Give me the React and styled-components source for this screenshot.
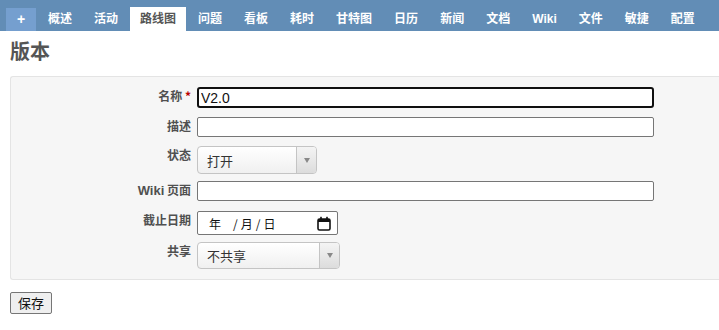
import React from "react";
import styled, { createGlobalStyle } from "styled-components";

const GlobalStyle = createGlobalStyle`
  html, body {
    margin: 0;
    padding: 0;
    background: #fff;
  }
  body {
    font-family: "Liberation Sans", "Noto Sans CJK SC", sans-serif;
    font-size: 12px;
    color: #333;
  }
`;

const TABS = ["概述", "活动", "路线图", "问题", "看板", "耗时", "甘特图", "日历", "新闻", "文档", "Wiki", "文件", "敏捷", "配置"];

function App() {
  return (
    <Page>
      <GlobalStyle />
      <MainMenu>
        <Tab $new>+</Tab>
        {TABS.map((t) => (
          <Tab key={t} $selected={t === "路线图"}>
            {t}
          </Tab>
        ))}
      </MainMenu>

      <Title>版本</Title>

      <Box>
        <Row $h={30}>
          <Label>
            名称 <Required>*</Required>
          </Label>
          <TextInput $focused defaultValue="V2.0" />
        </Row>
        <Row $h={29}>
          <Label>描述</Label>
          <TextInput />
        </Row>
        <Row $h={35}>
          <Label>状态</Label>
          <Select $w={120}>
            <span>打开</span>
            <Arrow />
          </Select>
        </Row>
        <Row $h={30}>
          <Label>
            <b>Wiki</b> 页面
          </Label>
          <TextInput />
        </Row>
        <Row $h={31}>
          <Label>截止日期</Label>
          <DateInput>
            <DateText>
              <span>年</span>
              <Slash>/</Slash>
              <span>月</span>
              <Slash $tight>/</Slash>
              <span>日</span>
            </DateText>
            <svg width="14" height="15" viewBox="0 0 14 15">
              <rect x="1" y="3" width="12" height="11" rx="1.5" fill="none" stroke="#111" strokeWidth="1.6" />
              <rect x="1" y="3" width="12" height="3" fill="#111" />
              <rect x="3.2" y="0.8" width="1.6" height="3" fill="#111" />
              <rect x="9.2" y="0.8" width="1.6" height="3" fill="#111" />
            </svg>
          </DateInput>
        </Row>
        <Row $h={27}>
          <Label>共享</Label>
          <Select $w={143} $h={27}>
            <span>不共享</span>
            <Arrow />
          </Select>
        </Row>
      </Box>

      <SaveButton>保存</SaveButton>
    </Page>
  );
}

export default App;

const Page = styled.div`
  width: 100%;
`;

const MainMenu = styled.nav`
  display: flex;
  align-items: flex-end;
  height: 31px;
  padding-left: 6px;
  background: #628db6;
  overflow: hidden;
`;

const Tab = styled.div`
  flex: none;
  box-sizing: border-box;
  ${(p) => p.$new && "width: 30px; text-align: center;"}
  height: ${(p) => (p.$selected ? 24 : 23)}px;
  line-height: 23px;
  padding: 0 10px;
  margin-right: 2px;
  font-family: "Liberation Sans", "Noto Sans CJK SC", sans-serif;
  font-weight: bold;
  font-size: ${(p) => (p.$new ? 14 : 12)}px;
  color: ${(p) => (p.$selected ? "#555" : "#fff")};
  background: ${(p) => (p.$selected ? "#fff" : p.$new ? "#759fcf" : "transparent")};
  ${(p) => p.$selected && "padding-top: 1px;"}
`;

const Title = styled.h2`
  margin: 8px 10px 0;
  height: 24px;
  line-height: 24px;
  font-size: 20px;
  font-weight: bold;
  color: #555;
  font-family: "Noto Sans CJK SC", sans-serif;
`;

const Box = styled.div`
  margin: 13px 0 0 10px;
  padding: 10px 0;
  background: #f6f6f6;
  border: 1px solid #e4e4e4;
  border-right: none;
  border-radius: 3px 0 0 3px;
`;

const Row = styled.div`
  display: flex;
  align-items: flex-start;
  height: ${(p) => p.$h}px;
`;

const Label = styled.label`
  width: 180px;
  margin-right: 6px;
  text-align: right;
  line-height: 18px;
  font-family: "Noto Sans CJK SC", sans-serif;
  font-weight: bold;
  font-size: 12px;
  color: #505050;
  b {
    font-family: "Liberation Sans", sans-serif;
    font-weight: bold;
    font-size: 13px;
  }
`;

const Required = styled.span`
  color: #bb0000;
  font-weight: bold;
`;

const TextInput = styled.input`
  box-sizing: border-box;
  width: 457px;
  height: ${(p) => (p.$focused ? 21 : 20)}px;
  padding: 0 ${(p) => (p.$focused ? 2 : 3)}px;
  border: ${(p) => (p.$focused ? "2px solid #101010" : "1px solid #767676")};
  border-radius: ${(p) => (p.$focused ? 3 : 2)}px;
  background: #fff;
  font-family: "Liberation Sans", sans-serif;
  font-size: 14px;
  color: #111;
  outline: none;
`;

const Select = styled.div`
  box-sizing: border-box;
  display: flex;
  align-items: center;
  width: ${(p) => p.$w}px;
  height: ${(p) => p.$h || 28}px;
  padding-left: 9px;
  border: 1px solid #c4c4c4;
  border-radius: 4px;
  background: linear-gradient(#ffffff, #f0f0f0);
  font-family: "Noto Sans CJK SC", sans-serif;
  font-size: 13px;
  color: #333;
  span {
    flex: 1;
  }
`;

const Arrow = styled.div`
  width: 19px;
  height: 100%;
  border-left: 1px solid #c4c4c4;
  background: linear-gradient(#f4f4f4, #dcdcdc);
  border-radius: 0 3px 3px 0;
  display: flex;
  align-items: center;
  justify-content: center;
  &::after {
    content: "";
    border-left: 3.5px solid transparent;
    border-right: 3.5px solid transparent;
    border-top: 5px solid #888;
  }
`;

const DateInput = styled.div`
  box-sizing: border-box;
  display: flex;
  align-items: center;
  justify-content: space-between;
  width: 141px;
  height: 24px;
  padding: 0 6px 0 11px;
  border: 1px solid #767676;
  border-radius: 2px;
  background: #fff;
`;

const DateText = styled.div`
  display: flex;
  font-family: "Noto Sans CJK SC", sans-serif;
  font-size: 12px;
  color: #111;
`;

const Slash = styled.span`
  margin-left: ${(p) => (p.$tight ? 3 : 12)}px;
  margin-right: 3px;
`;

const SaveButton = styled.button`
  display: block;
  margin: 12px 0 0 10px;
  height: 22px;
  padding: 0 7px;
  border: 1px solid #767676;
  border-radius: 2px;
  background: #efefef;
  font-family: "Noto Sans CJK SC", sans-serif;
  font-size: 13px;
  color: #111;
  line-height: 20px;
`;
